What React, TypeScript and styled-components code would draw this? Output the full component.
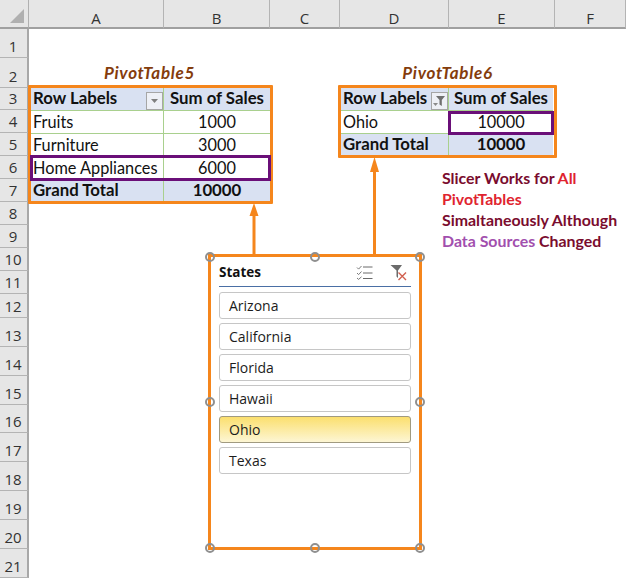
import React from "react";
import styled, { createGlobalStyle } from "styled-components";

const Global = createGlobalStyle`
  html, body { margin: 0; padding: 0; background: #fff; overflow: hidden; }
  #root { width: 626px; height: 578px; }
`;

const rowHeights = [29, 30, 22, 23, 23, 23, 23, 23, 23, 23, 23, 24, 29, 29, 29, 28, 29, 29, 29, 29, 29];
const colNames = ["A", "B", "C", "D", "E", "F"];

const Sheet = styled.div`
  position: relative;
  width: 626px;
  height: 578px;
  overflow: hidden;
  display: grid;
  grid-template-columns: 29px 135px 106px 70px 109px 106px 71px;
  grid-template-rows: 29px ${rowHeights.map((h) => `${h}px`).join(" ")} 1px;
  font-family: Lato, "Liberation Sans", sans-serif;
  background: #fff;
`;

const Corner = styled.div`
  grid-column: 1;
  grid-row: 1;
  background: #e6e6e6;
  border-right: 1px solid #b0b0b0;
  border-bottom: 2px solid #a0a0a0;
  box-sizing: border-box;
  display: flex;
  align-items: flex-end;
  justify-content: flex-end;
  padding: 0 4px 4px 0;
`;

const ColHead = styled.div`
  background: #e6e6e6;
  border-right: 1px solid #b4b4b4;
  border-bottom: 2px solid #a0a0a0;
  box-sizing: border-box;
  display: flex;
  align-items: center;
  justify-content: center;
  padding-top: 9px;
  font: 15px "Open Sans", sans-serif;
  color: #333;
`;

const RowHead = styled.div<{ $row: number }>`
  grid-column: 1;
  grid-row: ${(p) => p.$row};
  background: #e6e6e6;
  border-right: 2px solid #a8a8a8;
  border-bottom: 1px solid #b4b4b4;
  box-sizing: border-box;
  display: flex;
  align-items: flex-end;
  justify-content: center;
  padding: 0 1px 1px 0;
  font: 15px/20px "Open Sans", sans-serif;
  color: #333;
`;

const Title = styled.div<{ $col: string }>`
  grid-column: ${(p) => p.$col};
  grid-row: 3;
  display: flex;
  align-items: flex-end;
  justify-content: center;
  padding-bottom: 5px;
  font: italic 700 17px/20px Lato, sans-serif;
  letter-spacing: 0.7px;
  color: #843c0c;
`;

const Frame = styled.div<{ $col: string; $row: string; $margin: string; $cols: string; $rows: string }>`
  grid-column: ${(p) => p.$col};
  grid-row: ${(p) => p.$row};
  margin: ${(p) => p.$margin};
  position: relative;
  display: grid;
  grid-template-columns: ${(p) => p.$cols};
  grid-template-rows: ${(p) => p.$rows};
  border: 3px solid #f5861c;
  border-radius: 1px;
  background: #fff;
`;

const Cell = styled.div<{ $kind?: "head" | "total"; $center?: boolean; $last?: boolean; $end?: boolean }>`
  display: flex;
  align-items: center;
  justify-content: ${(p) => (p.$center ? "center" : "flex-start")};
  box-sizing: border-box;
  padding-left: ${(p) => (p.$center ? 0 : 2)}px;
  padding-bottom: ${(p) => (p.$kind ? 2 : 0)}px;
  font-size: ${(p) => (p.$kind ? 16.8 : 16.3)}px;
  line-height: 20px;
  white-space: nowrap;
  color: #111;
  font-weight: ${(p) => (p.$kind ? 700 : 400)};
  background: ${(p) => (p.$kind ? "#d9e1f2" : "#fff")};
  border-right: ${(p) => (p.$last ? "none" : "1px solid #a9d08e")};
  border-bottom: ${(p) => (p.$end ? "none" : "1px solid #a9d08e")};
`;

const FilterBox = styled.span`
  margin-left: auto;
  width: 17px;
  height: 18px;
  margin-top: 5px;
  box-sizing: border-box;
  border: 1px solid #a6a6a6;
  background: #eef0f6;
  display: flex;
  align-items: center;
  justify-content: center;
  flex: none;
`;

const Highlight = styled.div<{ $left: number; $top: number; $width: number; $height: number }>`
  position: absolute;
  left: ${(p) => p.$left}px;
  top: ${(p) => p.$top}px;
  width: ${(p) => p.$width}px;
  height: ${(p) => p.$height}px;
  box-sizing: border-box;
  border: 3px solid #6a0f78;
`;

const Note = styled.div`
  position: absolute;
  left: 442px;
  top: 167px;
  font: 700 15.9px/21px Lato, sans-serif;
  color: #7a0c2e;
  white-space: nowrap;
`;

const Red = styled.span`
  color: #e0242f;
`;

const Purple = styled.span`
  color: #a24fae;
`;

const Arrows = styled.svg`
  position: absolute;
  left: 0;
  top: 0;
  pointer-events: none;
`;

const Slicer = styled.div`
  position: absolute;
  left: 208px;
  top: 254px;
  width: 214px;
  height: 296px;
  box-sizing: border-box;
  border: 3px solid #f5861c;
  background: #fff;
  padding: 0 8px;
  display: flex;
  flex-direction: column;
  font-family: "Open Sans", sans-serif;
`;

const SlicerHead = styled.div`
  height: 30px;
  box-sizing: border-box;
  border-bottom: 1px solid #4a6fa5;
  display: flex;
  align-items: center;
  font-size: 13.5px;
  font-weight: 700;
  color: #111;
  margin-bottom: 5px;
`;

const HeadIcons = styled.div`
  margin-left: auto;
  display: flex;
  align-items: center;
  gap: 17px;
  padding-right: 4px;
  padding-top: 1px;
`;

const Items = styled.div`
  display: flex;
  flex-direction: column;
  gap: 4px;
`;

const Item = styled.div<{ $on?: boolean }>`
  height: 27px;
  box-sizing: border-box;
  border: 1px solid ${(p) => (p.$on ? "#a09a80" : "#c6c6c6")};
  border-radius: 3px;
  padding-left: 9px;
  display: flex;
  align-items: center;
  font-size: 14px;
  color: #1c1c1c;
  background: ${(p) => (p.$on ? "linear-gradient(#fbdf6e, #fdf6d4)" : "#fff")};
`;

const Handle = styled.span<{ $x: number; $y: number }>`
  position: absolute;
  left: ${(p) => p.$x - 208 - 3 - 5}px;
  top: ${(p) => p.$y - 254 - 3 - 5}px;
  width: 10px;
  height: 10px;
  box-sizing: border-box;
  border: 2px solid #8f8f8f;
  border-radius: 50%;
`;

const handles: [number, number][] = [
  [210, 257], [315, 257], [420, 257],
  [210, 402], [420, 402],
  [210, 548], [315, 548], [420, 548],
];

const states = ["Arizona", "California", "Florida", "Hawaii", "Ohio", "Texas"];

const DropIcon = () => (
  <svg width="9" height="6" viewBox="0 0 9 6">
    <path d="M1 1h7L4.5 5z" fill="#7f7f7f" />
  </svg>
);

const FunnelIcon = () => (
  <svg width="15" height="14" viewBox="0 0 15 14">
    <path d="M4 2h9L9.8 6v6L7.5 10.5V6z" fill="#6f6f6f" />
    <path d="M1 9h5l-2.5 3z" fill="#8a8a8a" />
  </svg>
);

const MultiSelectIcon = () => (
  <svg width="17" height="15" viewBox="0 0 17 15" fill="none">
    <path d="M1 2.5l1.6 1.6L5.5 1M1 8l1.6 1.6L5.5 6.5M1 13l1.6 1.4L5.5 11.8" stroke="#7a7a7a" strokeWidth="1" />
    <path d="M7 2h9.5M7 8h9.5M7 13.5h9.5" stroke="#6a6a6a" strokeWidth="1" />
  </svg>
);

const ClearFilterIcon = () => (
  <svg width="17" height="17" viewBox="0 0 17 17" fill="none">
    <path d="M0.5 1h11.5L8 6.5V14L6.5 12.5V6.5z" fill="#6b6b6b" />
    <path d="M8.5 8.5l7.5 7.5M16 8.5l-7.5 7.5" stroke="#d2604f" strokeWidth="1.4" />
  </svg>
);

export default function App() {
  return (
    <Sheet>
      <Global />
      <Corner>
        <svg width="14" height="14" viewBox="0 0 14 14">
          <path d="M14 0v14H0z" fill="#b0b0b0" />
        </svg>
      </Corner>
      {colNames.map((c) => (
        <ColHead key={c}>{c}</ColHead>
      ))}
      {rowHeights.map((_, i) => (
        <RowHead key={i} $row={i + 2}>{i + 1}</RowHead>
      ))}

      <Title $col="2 / 4">PivotTable5</Title>
      <Title $col="5 / 7">PivotTable6</Title>

      <Frame $col="2 / 4" $row="4 / 9" $margin="-3px -3px -2px -1px" $cols="133px 106px" $rows="23px 23px 23px 23px 21px">
        <Cell $kind="head">
          Row Labels
          <FilterBox><DropIcon /></FilterBox>
        </Cell>
        <Cell $kind="head" $center $last>Sum of Sales</Cell>
        <Cell>Fruits</Cell>
        <Cell $center $last>1000</Cell>
        <Cell>Furniture</Cell>
        <Cell $center $last>3000</Cell>
        <Cell>Home Appliances</Cell>
        <Cell $center $last>6000</Cell>
        <Cell $kind="total" $end>Grand Total</Cell>
        <Cell $kind="total" $center $last $end>10000</Cell>
        <Highlight $left={-1} $top={67} $width={241} $height={26} />
      </Frame>

      <Frame $col="5 / 7" $row="4 / 7" $margin="-3px -2px -2px -2px" $cols="108px 104px" $rows="23px 23px 21px">
        <Cell $kind="head">
          Row Labels
          <FilterBox><FunnelIcon /></FilterBox>
        </Cell>
        <Cell $kind="head" $center $last>Sum of Sales</Cell>
        <Cell>Ohio</Cell>
        <Cell $center $last>10000</Cell>
        <Cell $kind="total" $end>Grand Total</Cell>
        <Cell $kind="total" $center $last $end>10000</Cell>
        <Highlight $left={107} $top={23} $width={106} $height={24} />
      </Frame>

      <Note>
        Slicer Works for <Red>All</Red>
        <br />
        <Red>PivotTables</Red>
        <br />
        Simaltaneously Although
        <br />
        <Purple>Data Sources</Purple> Changed
      </Note>

      <Arrows width="626" height="578" viewBox="0 0 626 578">
        <path d="M254 255V214" stroke="#f5861c" strokeWidth="3" />
        <path d="M254 203l4.5 13h-9z" fill="#f5861c" />
        <path d="M374.5 255V170" stroke="#f5861c" strokeWidth="3" />
        <path d="M374.5 157l4.5 15h-9z" fill="#f5861c" />
      </Arrows>

      <Slicer>
        <SlicerHead>
          States
          <HeadIcons>
            <MultiSelectIcon />
            <ClearFilterIcon />
          </HeadIcons>
        </SlicerHead>
        <Items>
          {states.map((s) => (
            <Item key={s} $on={s === "Ohio"}>{s}</Item>
          ))}
        </Items>
        {handles.map(([x, y]) => (
          <Handle key={`${x}-${y}`} $x={x} $y={y} />
        ))}
      </Slicer>
    </Sheet>
  );
}
